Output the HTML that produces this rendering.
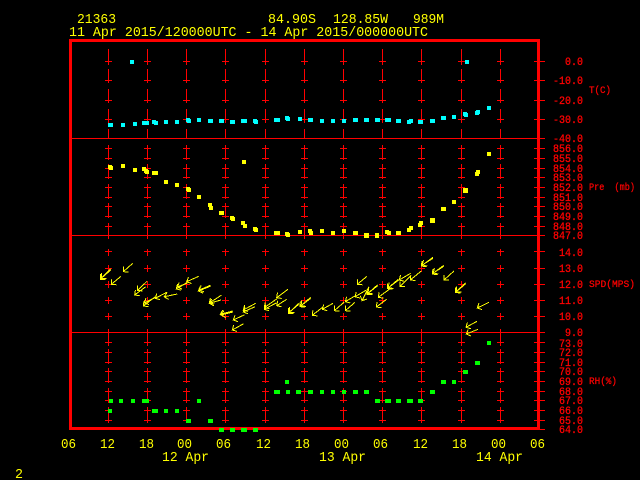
<!DOCTYPE html>
<html>
<head>
<meta charset="utf-8">
<title>Station time series</title>
<style>
html,body{margin:0;padding:0;background:#000;width:640px;height:480px;overflow:hidden}
svg{display:block}
text{font-family:"Liberation Mono",monospace;white-space:pre}
.y{fill:#ff0;font-size:14px}
.r{fill:#f00;stroke:#f00;stroke-width:.3px;font-size:11px}
.s{fill:#f00;stroke:#f00;stroke-width:.25px;font-size:10.5px}
</style>
</head>
<body>
<svg width="640" height="480" viewBox="0 0 640 480" xmlns="http://www.w3.org/2000/svg">
<defs>
<path id="col" fill="none" stroke="#f00" stroke-width="1" shape-rendering="crispEdges" d="M.5 49V65M.5 69V83M.5 89V103M.5 109V123M.5 129V138M.5 145V160M.5 164V179M.5 184V199M.5 203V218M.5 223V239M.5 249V256M.5 265V272M.5 281V288M.5 297V304M.5 313V320M.5 329V346M.5 349V364M.5 368V383M.5 388V403M.5 407V423
M-3 61.5H4M-3 80.5H4M-3 100.5H4M-3 119.5H4
M-3 148.5H4M-3 158.5H4M-3 168.5H4M-3 177.5H4M-3 187.5H4M-3 197.5H4M-3 206.5H4M-3 216.5H4M-3 226.5H4
M-3 251.5H4M-3 268.5H4M-3 284.5H4M-3 300.5H4M-3 316.5H4
M-3 342.5H4M-3 352.5H4M-3 362.5H4M-3 371.5H4M-3 381.5H4M-3 391.5H4M-3 400.5H4M-3 410.5H4M-3 420.5H4"/>
<marker id="h" markerUnits="userSpaceOnUse" markerWidth="12" markerHeight="12" refX="0" refY="0" orient="auto" viewBox="-6 -6 12 12" overflow="visible">
<path d="M3.6 -3.6L0 0L3.6 3.6" fill="none" stroke="#ff0" stroke-width="1" shape-rendering="crispEdges"/>
</marker>
</defs>

<use href="#col" x="108"/><use href="#col" x="147"/><use href="#col" x="186"/><use href="#col" x="225"/><use href="#col" x="265"/><use href="#col" x="304"/><use href="#col" x="343"/><use href="#col" x="382"/><use href="#col" x="421"/><use href="#col" x="461"/><use href="#col" x="500"/>

<path fill="none" stroke="#f00" stroke-width="1" shape-rendering="crispEdges" d="M72 138.5H545M72 235.5H545M72 332.5H545
M534 61.5H545M534 80.5H545M534 100.5H545M534 119.5H545
M534 148.5H545M534 158.5H545M534 168.5H545M534 177.5H545M534 187.5H545M534 197.5H545M534 206.5H545M534 216.5H545M534 226.5H545
M534 251.5H545M534 268.5H545M534 284.5H545M534 300.5H545M534 316.5H545
M534 342.5H545M534 352.5H545M534 362.5H545M534 371.5H545M534 381.5H545M534 391.5H545M534 400.5H545M534 410.5H545M534 420.5H545M534 429.5H545"/>
<rect x="70.5" y="40.5" width="468" height="388" fill="none" stroke="#f00" stroke-width="3" shape-rendering="crispEdges"/>

<!-- wind arrows -->
<g fill="none" stroke="#ff0" stroke-width="1" marker-start="url(#h)" shape-rendering="crispEdges">
<line x1="100.3" y1="279.3" x2="110.7" y2="269"/>
<line x1="101.3" y1="278.3" x2="110.7" y2="270"/>
<line x1="123.3" y1="271.7" x2="132.7" y2="263.3"/>
<line x1="111.3" y1="284.3" x2="121" y2="276.3"/>
<line x1="137.3" y1="290.7" x2="147" y2="281.3"/>
<line x1="134.7" y1="295" x2="145.7" y2="286.7"/>
<line x1="143.3" y1="306" x2="155.3" y2="296.7"/>
<line x1="144.3" y1="303" x2="155" y2="297.7"/>
<line x1="155.3" y1="298.3" x2="166.7" y2="292.3"/>
<line x1="164.3" y1="296.7" x2="177.3" y2="294"/>
<line x1="176.3" y1="289" x2="187.3" y2="282.3"/>
<line x1="177.3" y1="287" x2="187.3" y2="283"/>
<line x1="186.7" y1="281.7" x2="198.7" y2="276.3"/>
<line x1="198.3" y1="291" x2="210.3" y2="286.3"/>
<line x1="199.3" y1="290" x2="210.3" y2="285.3"/>
<line x1="209.3" y1="303" x2="221.3" y2="295.3"/>
<line x1="209.3" y1="303.3" x2="221" y2="300"/>
<line x1="220.3" y1="314.3" x2="232.7" y2="311"/>
<line x1="221.3" y1="315" x2="232.7" y2="312"/>
<line x1="232.3" y1="330" x2="243.7" y2="323.7"/>
<line x1="233.3" y1="320" x2="244.7" y2="314.7"/>
<line x1="243.3" y1="310" x2="255.7" y2="303.3"/>
<line x1="243.3" y1="312" x2="255" y2="306.7"/>
<line x1="264.3" y1="307.7" x2="277" y2="298.7"/>
<line x1="264.3" y1="309.3" x2="276.7" y2="302.7"/>
<line x1="276.7" y1="297.7" x2="288" y2="289.3"/>
<line x1="276.7" y1="305.7" x2="286.7" y2="299.3"/>
<line x1="288.3" y1="313.3" x2="298.7" y2="303.3"/>
<line x1="289.3" y1="312.3" x2="298.7" y2="304.3"/>
<line x1="300" y1="306.7" x2="310.7" y2="297.3"/>
<line x1="301" y1="305.7" x2="310.7" y2="298.3"/>
<line x1="312.3" y1="315.3" x2="323.3" y2="306.7"/>
<line x1="322.3" y1="309.3" x2="333" y2="303.3"/>
<line x1="334.3" y1="310.7" x2="344.3" y2="302"/>
<line x1="345.3" y1="310.7" x2="355" y2="302.3"/>
<line x1="345.3" y1="301.7" x2="356" y2="295.3"/>
<line x1="357.3" y1="284.3" x2="367" y2="276.3"/>
<line x1="355" y1="296.7" x2="366" y2="290.3"/>
<line x1="362" y1="300.7" x2="369" y2="286.7"/>
<line x1="367" y1="294.3" x2="377.7" y2="284.7"/>
<line x1="368" y1="293.3" x2="377.7" y2="285.7"/>
<line x1="378.3" y1="297.3" x2="389.3" y2="289.3"/>
<line x1="376.3" y1="307" x2="386.7" y2="299.3"/>
<line x1="387.3" y1="288.7" x2="398.3" y2="279.3"/>
<line x1="388.3" y1="287.7" x2="398.3" y2="280.3"/>
<line x1="399.3" y1="280" x2="410.7" y2="273.3"/>
<line x1="400" y1="286.7" x2="410.7" y2="276"/>
<line x1="410.3" y1="280" x2="421.3" y2="271"/>
<line x1="421.3" y1="266" x2="433" y2="257.3"/>
<line x1="422.3" y1="265" x2="433" y2="258.3"/>
<line x1="432.3" y1="274" x2="443.7" y2="265.3"/>
<line x1="433.3" y1="273" x2="443.7" y2="266.3"/>
<line x1="444" y1="280" x2="454" y2="271"/>
<line x1="455.3" y1="292.7" x2="465.7" y2="282.7"/>
<line x1="456.3" y1="291.7" x2="465.7" y2="283.7"/>
<line x1="477.3" y1="308" x2="489" y2="302.3"/>
<line x1="466" y1="327.3" x2="477" y2="321.3"/>
<line x1="466.3" y1="334" x2="478" y2="329.3"/>
</g>

<!-- temperature -->
<path fill="#0ff" shape-rendering="crispEdges" d="M130 60h4v4h-4zM465 60h4v4h-4zM108 123h5v4h-5zM121 123h4v4h-4zM133 122h4v4h-4zM142 121h7v4h-7zM152 120h4v4h-4zM154 121h4v4h-4zM164 120h4v4h-4zM175 120h4v4h-4zM186 118h4v4h-4zM187 119h4v4h-4zM197 118h4v4h-4zM208 119h5v4h-5zM219 119h5v4h-5zM230 120h5v4h-5zM241 119h6v4h-6zM253 119h4v4h-4zM254 120h4v4h-4zM274 118h6v4h-6zM285 116h4v4h-4zM286 117h4v4h-4zM298 117h4v4h-4zM308 118h5v4h-5zM320 119h4v4h-4zM331 119h4v4h-4zM342 119h4v4h-4zM353 118h5v4h-5zM364 118h5v4h-5zM375 118h5v4h-5zM385 118h6v4h-6zM396 119h5v4h-5zM407 120h4v4h-4zM409 119h4v4h-4zM418 120h5v4h-5zM430 119h5v4h-5zM441 116h5v4h-5zM452 115h4v4h-4zM463 112h4v4h-4zM464 113h4v4h-4zM475 111h4v4h-4zM476 110h4v4h-4zM487 106h4v4h-4z"/>
<!-- pressure -->
<path fill="#ff0" shape-rendering="crispEdges" d="M108 165h4v4h-4zM109 166h4v4h-4zM121 164h4v4h-4zM133 168h4v4h-4zM142 167h4v4h-4zM144 169h4v4h-4zM145 170h4v4h-4zM152 171h6v4h-6zM242 160h4v4h-4zM164 180h4v4h-4zM175 183h4v4h-4zM186 187h4v4h-4zM187 188h4v4h-4zM197 195h4v4h-4zM208 203h4v4h-4zM209 206h4v4h-4zM219 211h5v4h-5zM230 216h4v4h-4zM231 217h4v4h-4zM241 221h4v4h-4zM243 224h4v4h-4zM253 227h4v4h-4zM254 228h4v4h-4zM274 231h6v4h-6zM285 232h4v4h-4zM286 233h4v4h-4zM298 230h4v4h-4zM308 229h4v4h-4zM309 231h4v4h-4zM320 229h4v4h-4zM331 231h4v4h-4zM342 229h4v4h-4zM353 231h5v4h-5zM364 233h5v5h-5zM375 233h4v5h-4zM385 230h4v4h-4zM387 231h4v4h-4zM396 231h5v4h-5zM407 228h4v4h-4zM409 226h4v4h-4zM418 223h4v4h-4zM419 221h4v4h-4zM430 218h5v5h-5zM441 207h5v4h-5zM452 200h4v4h-4zM463 188h5v5h-5zM475 172h4v4h-4zM476 170h4v4h-4zM487 152h4v4h-4z"/>
<!-- humidity -->
<path fill="#0f0" shape-rendering="crispEdges" d="M108 409h4v4h-4zM109 399h4v4h-4zM119 399h4v4h-4zM131 399h4v4h-4zM142 399h7v4h-7zM152 409h6v4h-6zM164 409h4v4h-4zM175 409h4v4h-4zM186 419h5v4h-5zM197 399h4v4h-4zM208 419h5v4h-5zM219 428h5v4h-5zM230 428h5v4h-5zM241 428h6v4h-6zM253 428h5v4h-5zM274 390h6v4h-6zM285 380h4v4h-4zM286 390h4v4h-4zM296 390h5v4h-5zM308 390h5v4h-5zM320 390h4v4h-4zM331 390h4v4h-4zM342 390h4v4h-4zM353 390h5v4h-5zM364 390h5v4h-5zM375 399h5v4h-5zM385 399h6v4h-6zM396 399h5v4h-5zM407 399h6v4h-6zM418 399h5v4h-5zM430 390h5v4h-5zM441 380h5v4h-5zM452 380h4v4h-4zM463 370h5v4h-5zM475 361h5v4h-5zM487 341h4v4h-4z"/>

<!-- header -->
<text class="y" x="77" y="23" textLength="39" lengthAdjust="spacingAndGlyphs">21363</text>
<text class="y" x="268" y="23" textLength="48" lengthAdjust="spacingAndGlyphs">84.90S</text>
<text class="y" x="333" y="23" textLength="55" lengthAdjust="spacingAndGlyphs">128.85W</text>
<text class="y" x="413" y="23" textLength="31" lengthAdjust="spacingAndGlyphs">989M</text>
<text class="y" x="69" y="36" textLength="359" lengthAdjust="spacingAndGlyphs">11 Apr 2015/120000UTC - 14 Apr 2015/000000UTC</text>

<!-- right scale -->
<text class="r" x="565" y="65" textLength="18" lengthAdjust="spacingAndGlyphs">0.0</text>
<text class="r" x="553" y="84" textLength="30" lengthAdjust="spacingAndGlyphs">-10.0</text>
<text class="r" x="553" y="104" textLength="30" lengthAdjust="spacingAndGlyphs">-20.0</text>
<text class="r" x="553" y="123" textLength="30" lengthAdjust="spacingAndGlyphs">-30.0</text>
<text class="r" x="553" y="142" textLength="30" lengthAdjust="spacingAndGlyphs">-40.0</text>
<text class="r" x="553" y="152" textLength="30" lengthAdjust="spacingAndGlyphs">856.0</text>
<text class="r" x="553" y="162" textLength="30" lengthAdjust="spacingAndGlyphs">855.0</text>
<text class="r" x="553" y="172" textLength="30" lengthAdjust="spacingAndGlyphs">854.0</text>
<text class="r" x="553" y="181" textLength="30" lengthAdjust="spacingAndGlyphs">853.0</text>
<text class="r" x="553" y="191" textLength="30" lengthAdjust="spacingAndGlyphs">852.0</text>
<text class="r" x="553" y="201" textLength="30" lengthAdjust="spacingAndGlyphs">851.0</text>
<text class="r" x="553" y="210" textLength="30" lengthAdjust="spacingAndGlyphs">850.0</text>
<text class="r" x="553" y="220" textLength="30" lengthAdjust="spacingAndGlyphs">849.0</text>
<text class="r" x="553" y="230" textLength="30" lengthAdjust="spacingAndGlyphs">848.0</text>
<text class="r" x="553" y="239" textLength="30" lengthAdjust="spacingAndGlyphs">847.0</text>
<text class="r" x="559" y="256" textLength="24" lengthAdjust="spacingAndGlyphs">14.0</text>
<text class="r" x="559" y="272" textLength="24" lengthAdjust="spacingAndGlyphs">13.0</text>
<text class="r" x="559" y="288" textLength="24" lengthAdjust="spacingAndGlyphs">12.0</text>
<text class="r" x="559" y="304" textLength="24" lengthAdjust="spacingAndGlyphs">11.0</text>
<text class="r" x="559" y="320" textLength="24" lengthAdjust="spacingAndGlyphs">10.0</text>
<text class="r" x="565" y="336" textLength="18" lengthAdjust="spacingAndGlyphs">9.0</text>
<text class="r" x="559" y="347" textLength="24" lengthAdjust="spacingAndGlyphs">73.0</text>
<text class="r" x="559" y="356" textLength="24" lengthAdjust="spacingAndGlyphs">72.0</text>
<text class="r" x="559" y="366" textLength="24" lengthAdjust="spacingAndGlyphs">71.0</text>
<text class="r" x="559" y="375" textLength="24" lengthAdjust="spacingAndGlyphs">70.0</text>
<text class="r" x="559" y="385" textLength="24" lengthAdjust="spacingAndGlyphs">69.0</text>
<text class="r" x="559" y="395" textLength="24" lengthAdjust="spacingAndGlyphs">68.0</text>
<text class="r" x="559" y="404" textLength="24" lengthAdjust="spacingAndGlyphs">67.0</text>
<text class="r" x="559" y="414" textLength="24" lengthAdjust="spacingAndGlyphs">66.0</text>
<text class="r" x="559" y="424" textLength="24" lengthAdjust="spacingAndGlyphs">65.0</text>
<text class="r" x="559" y="433" textLength="24" lengthAdjust="spacingAndGlyphs">64.0</text>

<text class="s" x="589" y="93" textLength="22" lengthAdjust="spacingAndGlyphs">T(C)</text>
<text class="s" x="589" y="190" textLength="46" lengthAdjust="spacingAndGlyphs">Pre  (mb)</text>
<text class="s" x="589" y="287" textLength="46" lengthAdjust="spacingAndGlyphs">SPD(MPS)</text>
<text class="s" x="589" y="384" textLength="28" lengthAdjust="spacingAndGlyphs">RH(%)</text>

<!-- bottom axis -->
<text class="y" x="61" y="448" textLength="15" lengthAdjust="spacingAndGlyphs">06</text>
<text class="y" x="100" y="448" textLength="15" lengthAdjust="spacingAndGlyphs">12</text>
<text class="y" x="139" y="448" textLength="15" lengthAdjust="spacingAndGlyphs">18</text>
<text class="y" x="177" y="448" textLength="15" lengthAdjust="spacingAndGlyphs">00</text>
<text class="y" x="216" y="448" textLength="15" lengthAdjust="spacingAndGlyphs">06</text>
<text class="y" x="256" y="448" textLength="15" lengthAdjust="spacingAndGlyphs">12</text>
<text class="y" x="295" y="448" textLength="15" lengthAdjust="spacingAndGlyphs">18</text>
<text class="y" x="334" y="448" textLength="15" lengthAdjust="spacingAndGlyphs">00</text>
<text class="y" x="373" y="448" textLength="15" lengthAdjust="spacingAndGlyphs">06</text>
<text class="y" x="413" y="448" textLength="15" lengthAdjust="spacingAndGlyphs">12</text>
<text class="y" x="452" y="448" textLength="15" lengthAdjust="spacingAndGlyphs">18</text>
<text class="y" x="491" y="448" textLength="15" lengthAdjust="spacingAndGlyphs">00</text>
<text class="y" x="530" y="448" textLength="15" lengthAdjust="spacingAndGlyphs">06</text>
<text class="y" x="162" y="461" textLength="47" lengthAdjust="spacingAndGlyphs">12 Apr</text>
<text class="y" x="319" y="461" textLength="47" lengthAdjust="spacingAndGlyphs">13 Apr</text>
<text class="y" x="476" y="461" textLength="47" lengthAdjust="spacingAndGlyphs">14 Apr</text>
<text class="y" x="15" y="478" textLength="8" lengthAdjust="spacingAndGlyphs">2</text>
</svg>
</body>
</html>
